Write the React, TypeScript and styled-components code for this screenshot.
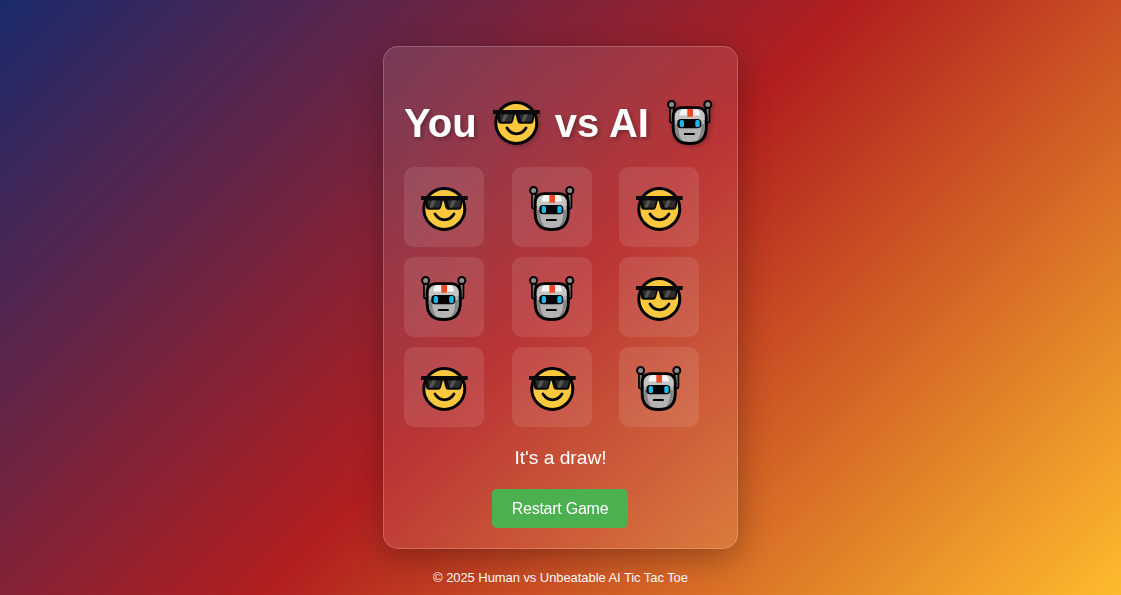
import React from "react";
import styled, { createGlobalStyle } from "styled-components";

const Global = createGlobalStyle`
  html, body { margin: 0; padding: 0; }
  body {
    font-family: "Liberation Sans", Arial, sans-serif;
    background: linear-gradient(135deg, #1a2a6c, #b21f1f, #fdbb2d);
    color: #fff;
    min-height: 595px;
  }
`;

const Page = styled.div`
  height: 595px;
  display: flex;
  flex-direction: column;
  align-items: center;
  justify-content: flex-start;
  padding-top: 46px;
  box-sizing: border-box;
  overflow: hidden;
`;

const Card = styled.main`
  width: 355px;
  box-sizing: border-box;
  padding: 20px;
  display: flex;
  flex-direction: column;
  background: rgba(255, 255, 255, 0.1);
  border: 1px solid rgba(255, 255, 255, 0.2);
  border-radius: 15px;
  backdrop-filter: blur(10px);
  box-shadow: 0 8px 32px rgba(0, 0, 0, 0.3);
`;

const Title = styled.h1`
  margin: 32.800px 0 20.800px;
  font-size: 40px;
  line-height: 46px;
  height: 46px;
  font-weight: 700;
  white-space: nowrap;
  text-shadow: 2px 2px 4px rgba(0, 0, 0, 0.3);
  display: flex;
  align-items: flex-start;
  & > span { white-space: pre; }
`;

const TitleEmoji = styled.span<{ $width: number; $inset: number }>`
  width: ${(p) => p.$width}px;
  height: 46px;
  margin-top: -2px;
  padding-left: ${(p) => p.$inset}px;
  box-sizing: border-box;
  flex: none;
  display: flex;
  justify-content: flex-start;
  filter: drop-shadow(2px 2px 2px rgba(0, 0, 0, 0.2));
`;

const Board = styled.div`
  display: grid;
  grid-template-columns: repeat(3, 1fr);
  gap: 10px;
`;

const Cell = styled.div`
  width: 80px;
  height: 80px;
  border-radius: 10px;
  background: rgba(255, 255, 255, 0.1);
  display: flex;
  align-items: center;
  justify-content: center;
`;

const Status = styled.p`
  margin: 19px 0 20px;
  font-size: 19.200px;
  line-height: 23px;
  text-align: center;
`;

const Restart = styled.button`
  align-self: center;
  width: 136px;
  height: 39px;
  margin-right: 1px;
  padding: 1px 0 0;
  border: none;
  border-radius: 5px;
  background: #4caf50;
  color: #fff;
  font-family: "Liberation Sans", Arial, sans-serif;
  font-size: 16px;
  letter-spacing: -0.250px;
`;

const Footer = styled.footer`
  margin-top: 21px;
  font-size: 13px;
  letter-spacing: -0.070px;
  line-height: 16px;
  text-align: center;
`;

const Glyph = styled.svg`
  width: 46px;
  height: 46px;
  flex: none;
  display: block;
  overflow: visible;
`;

const Cool = () => (
  <Glyph viewBox="0 -2 46 46" aria-hidden="true">
    <circle cx="23.300" cy="22.900" r="20.500" fill="#fcc83e" stroke="#000" strokeWidth="3" />
    <path d="M14 28c2.500 4 5.600 5.800 9.500 5.800s7-1.800 9.500-5.800" fill="none" stroke="#000" strokeWidth="2.800" strokeLinecap="round" />
    <path d="M0 10h46.700v4h-4.700l-1.600 7.500q-.5 2.200-2.800 2.200h-10.300q-2.300 0-2.900-2.200l-1.800-6.700h-.8l-1.800 6.700q-.6 2.200-2.900 2.200H7.800q-2.300 0-2.800-2.200l-1.600-7.500H0z" fill="#0a0a0a" />
    <path d="M6.500 14.500h13.500l-1.600 7H8.200zM26.500 14.500h13.500l-1.500 7h-10z" fill="#2e2e2e" />
    <path d="M11 14.500h4l-3.500 7H8.500zM31 14.500h4l-3.500 7h-3z" fill="#555" />
  </Glyph>
);

const Bot = () => (
  <Glyph viewBox="0 -2 46 46" aria-hidden="true">
    <path d="M4.800 4.700v16M40.600 4.700v16" stroke="#000" strokeWidth="5.400" strokeLinecap="round" />
    <path d="M4.800 4.700v16M40.600 4.700v16" stroke="#7d7d7d" strokeWidth="2" strokeLinecap="round" />
    <circle cx="4.600" cy="4.500" r="3.500" fill="#8c8c8c" stroke="#000" strokeWidth="2" />
    <circle cx="40.800" cy="4.500" r="3.500" fill="#8c8c8c" stroke="#000" strokeWidth="2" />
    <path d="M6.200 17q0-9.200 9.200-9.200h14.600q9.200 0 9.200 9.200v10q0 16.600-16.500 16.600T6.200 27z" fill="#b4b4b4" stroke="#000" strokeWidth="3" />
    <path d="M7.800 17q0-8 8-8h13.800q8 0 8 8v3H7.800z" fill="#c4c4c4" />
    <path d="M12.500 15.500q.5-6.500 4-6.500h12.500q3.500 0 4 6.500z" fill="#f4f4f4" />
    <rect x="20.300" y="9" width="5.700" height="7.700" fill="#ea4a1f" />
    <path d="M7.800 24v4q.5 10 8 13.500q-4.500-6-4.500-13.500V24zM37.600 24v4q-.5 10-8 13.500q4.500-6 4.500-13.500V24z" fill="#858585" />
    <rect x="10.300" y="19" width="24" height="9.300" rx="3.800" fill="#000" />
    <rect x="12.700" y="20" width="4.300" height="7" rx="1.600" fill="#1cb8ea" />
    <rect x="28.300" y="20" width="4.400" height="7" rx="1.600" fill="#1cb8ea" />
    <path d="M17 34h10.700" stroke="#000" strokeWidth="2" />
  </Glyph>
);

const board: ("h" | "a")[] = ["h", "a", "h", "a", "a", "h", "h", "h", "a"];

export default function App() {
  return (
    <Page>
      <Global />
      <Card>
        <Title>
          <span>You </span>
          <TitleEmoji $width={56} $inset={5}><Cool /></TitleEmoji>
          <span> vs AI </span>
          <TitleEmoji $width={53} $inset={6.500}><Bot /></TitleEmoji>
        </Title>
        <Board>
          {board.map((c, i) => (
            <Cell key={i}>{c === "h" ? <Cool /> : <Bot />}</Cell>
          ))}
        </Board>
        <Status>It's a draw!</Status>
        <Restart>Restart Game</Restart>
      </Card>
      <Footer>© 2025 Human vs Unbeatable AI Tic Tac Toe</Footer>
    </Page>
  );
}
